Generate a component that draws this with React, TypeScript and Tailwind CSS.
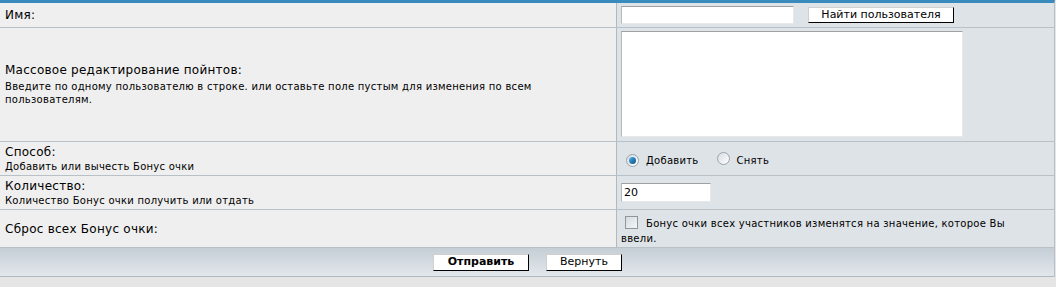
import React from "react";

const font = { fontFamily: '"DejaVu Sans", Verdana, sans-serif' };

function Radio({ checked }: { checked?: boolean }) {
  return (
    <span className="inline-flex h-[13px] w-[13px] items-center justify-center rounded-full border border-[#9aa3ab] bg-gradient-to-br from-[#d8dde2] to-[#ffffff]">
      {checked ? (
        <span className="h-[7px] w-[7px] rounded-full bg-gradient-to-br from-[#4fb3ee] to-[#0a4f86]" />
      ) : null}
    </span>
  );
}

export default function App() {
  return (
    <div className="h-[287px] w-[1056px] bg-[#e5e5e5] text-black" style={font}>
      <div className="w-[1055px] border-t-[3px] border-[#3a8bbd] border-r border-r-[#b8bfc6]">
        {/* Row 1 */}
        <div className="flex h-[25px] border-b border-[#b8c0c8]">
          <div className="flex w-[617px] items-center border-r border-[#b0b8c0] bg-[#efefef] pl-[5px] text-[12px] tracking-[0.25px]">
            Имя:
          </div>
          <div className="flex flex-1 items-center gap-[14px] bg-[#dee3e7] pl-[4px]">
            <input className="h-[18px] w-[173px] border border-t-[#a0a0a0] border-l-[#b8b8b8] border-b-[#e8e8e8] border-r-[#e8e8e8] bg-white outline-none" />
            <button className="h-[16px] w-[146px] border border-t-[#d0d0d0] border-l-[#d0d0d0] border-b-[#000] border-r-[#000] bg-white text-[11px] leading-[14px]">
              Найти пользователя
            </button>
          </div>
        </div>
        {/* Row 2 */}
        <div className="flex h-[114px] border-b border-[#b8c0c8]">
          <div className="flex w-[617px] flex-col justify-center border-r border-[#b0b8c0] bg-[#efefef] pl-[5px]">
            <div className="text-[12px] leading-[15px] tracking-[0.25px]">Массовое редактирование пойнтов:</div>
            <div className="mt-[2px] w-[570px] text-[10px] leading-[13px] tracking-[0.27px]">
              Введите по одному пользователю в строке. или оставьте поле пустым для изменения по всем пользователям.
            </div>
          </div>
          <div className="flex-1 bg-[#dee3e7] pl-[4px] pt-[3px]">
            <textarea className="block h-[106px] w-[342px] resize-none border border-t-[#a0a0a0] border-l-[#b8b8b8] border-b-[#e8e8e8] border-r-[#e8e8e8] bg-white outline-none" />
          </div>
        </div>
        {/* Row 3 */}
        <div className="flex h-[34px] border-b border-[#b8c0c8]">
          <div className="flex w-[617px] flex-col justify-center border-r border-[#b0b8c0] bg-[#efefef] pl-[5px]">
            <div className="text-[12px] leading-[15px] tracking-[0.25px]">Способ:</div>
            <div className="text-[10px] leading-[13px] tracking-[0.27px]">Добавить или вычесть Бонус очки</div>
          </div>
          <div className="flex flex-1 items-center bg-[#dee3e7] pl-[9px] pt-[3px] text-[10px] tracking-[0.27px]">
            <Radio checked />
            <span className="ml-[7px]">Добавить</span>
            <span className="ml-[18px]"><Radio /></span>
            <span className="ml-[7px]">Снять</span>
          </div>
        </div>
        {/* Row 4 */}
        <div className="flex h-[34px] border-b border-[#b8c0c8]">
          <div className="flex w-[617px] flex-col justify-center border-r border-[#b0b8c0] bg-[#efefef] pl-[5px]">
            <div className="text-[12px] leading-[15px] tracking-[0.25px]">Количество:</div>
            <div className="text-[10px] leading-[13px] tracking-[0.27px]">Количество Бонус очки получить или отдать</div>
          </div>
          <div className="flex flex-1 items-center bg-[#dee3e7] pl-[4px]">
            <input
              defaultValue="20"
              className="h-[19px] w-[90px] border border-t-[#a0a0a0] border-l-[#b8b8b8] border-b-[#e8e8e8] border-r-[#e8e8e8] bg-white pl-[2px] text-[11px] outline-none"
              style={font}
            />
          </div>
        </div>
        {/* Row 5 */}
        <div className="flex h-[38px] border-b border-[#b8c0c8]">
          <div className="flex w-[617px] items-center border-r border-[#b0b8c0] bg-[#efefef] pl-[5px] text-[12px] tracking-[0.25px]">
            Сброс всех Бонус очки:
          </div>
          <div className="flex-1 bg-[#dee3e7] pl-[4px] pr-[20px] pt-[6px] text-[10px] leading-[15px] tracking-[0.27px]">
            <span className="mr-[8px] ml-[4px] inline-block h-[13px] w-[13px] border border-[#8e959c] bg-gradient-to-br from-[#d6dbe0] to-[#f4f6f8] align-[-2px]" />
            Бонус очки всех участников изменятся на значение, которое Вы ввели.
          </div>
        </div>
        {/* Footer */}
        <div className="flex h-[29px] items-center justify-center gap-[17px] border-b border-[#b0b8c0] bg-gradient-to-b from-[#c5ced6] to-[#e2e7eb] pl-[1px]">
          <button className="h-[17px] w-[96px] border border-t-[#d0d0d0] border-l-[#d0d0d0] border-b-[#000] border-r-[#000] bg-white text-[11px] font-bold leading-[14px]">
            Отправить
          </button>
          <button className="h-[17px] w-[76px] border border-t-[#d0d0d0] border-l-[#d0d0d0] border-b-[#000] border-r-[#000] bg-white text-[11px] leading-[14px]">
            Вернуть
          </button>
        </div>
      </div>
    </div>
  );
}
